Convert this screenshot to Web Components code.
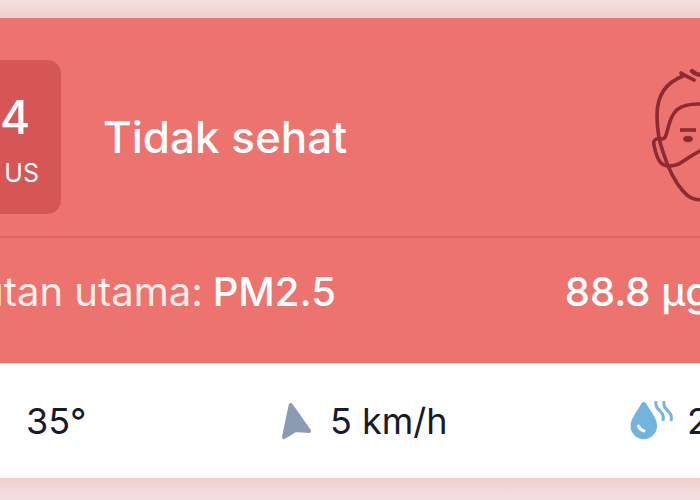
<!DOCTYPE html>
<html lang="id">
<head>
<meta charset="utf-8">
<title>Kualitas udara</title>
<style>
  body {
    margin: 0;
    padding: 18px 0 22px;
    background: linear-gradient(#f3e0e1, #f2cecd 18px, #f2cecd calc(100% - 22px), #f3e0e1);
    font-family: Inter, "Liberation Sans", sans-serif;
    overflow: hidden;
  }
</style>
</head>
<body>
<air-card>
  <air-status slot="status" value="4" unit="US">Tidak sehat</air-status>
  <air-pollutant slot="pollutant" label="utan utama:" amount="88.8 µg">PM2.5</air-pollutant>
  <air-reading slot="weather">35°</air-reading>
  <air-reading slot="weather" icon="wind">5 km/h</air-reading>
  <air-reading slot="weather" icon="humidity">2</air-reading>
</air-card>

<script>
class AirCard extends HTMLElement {
  constructor() {
    super();
    this.attachShadow({ mode: "open" });
  }

  static get styles() {
    return /* css */`
      :host {
        display: block;
        background: #fff;
      }

      .alert {
        background: #ed736f;
        color: #fff;
      }

      .weather {
        display: grid;
        grid-template-columns: minmax(0, 4fr) minmax(0, 5fr) minmax(0, 1fr);
        align-items: center;
        height: 115px;
        color: #161a2b;
      }
    `;
  }

  connectedCallback() {
    this.render();
  }

  render() {
    this.shadowRoot.innerHTML = /* html */`
    <style>${AirCard.styles}</style>
    <div class="alert">
      <slot name="status"></slot>
      <slot name="pollutant"></slot>
    </div>
    <div class="weather">
      <slot name="weather"></slot>
    </div>`;
  }
}

class AirStatus extends HTMLElement {
  constructor() {
    super();
    this.attachShadow({ mode: "open" });
  }

  static get styles() {
    return /* css */`
      :host {
        display: flex;
        align-items: center;
        padding: 42px 0 22px;
        border-bottom: 2px solid #d96866;
      }

      .index {
        box-sizing: border-box;
        width: 61px;
        height: 154px;
        padding: 29px 22px 0 0;
        border-radius: 0 14px 14px 0;
        background: #d65655;
        text-align: right;
      }

      .value {
        padding-right: 12px;
        font-size: 46px;
        line-height: 56px;
        font-weight: 500;
      }

      .unit {
        font-size: 25px;
        line-height: 56px;
      }

      .level {
        flex: 1;
        margin: 0 0 0 42px;
        font-size: 44px;
        line-height: 56px;
        font-weight: 500;
      }

      svg {
        width: 50px;
        height: 138px;
      }
    `;
  }

  connectedCallback() {
    this.render();
  }

  render() {
    this.shadowRoot.innerHTML = /* html */`
    <style>${AirStatus.styles}</style>
    <div class="index">
      <div class="value">${this.getAttribute("value")}</div>
      <div class="unit">${this.getAttribute("unit")}</div>
    </div>
    <h1 class="level"><slot></slot></h1>
    <svg viewBox="0 0 50 138" fill="none" stroke="#8e2a32" stroke-width="3.6" stroke-linecap="round" stroke-linejoin="round" aria-hidden="true">
      <path d="M44 12 C39 9 35 8 31 5 L33 8 C15 15 7 28 7 47 C7 59 9 73 13 84 C18 100 24 113 33 123 C39 130 44 132 52 132"/>
      <path d="M42 3 Q46 7 53 7" stroke-width="4.4"/>
      <path d="M10 71 C5 70 3 73 4 77 C6 87 8 92 11 95 C15 99 25 99 32 94 C38 90 45 85 52 82"/>
      <path d="M10 71 C16 72 16 67 18 60 C22 44 27 35 52 36"/>
      <path d="M30 62 H46" stroke-linecap="butt"/>
      <ellipse cx="38" cy="71" rx="5" ry="3.200" fill="#8e2a32" stroke="none"/>
    </svg>`;
  }
}

class AirPollutant extends HTMLElement {
  constructor() {
    super();
    this.attachShadow({ mode: "open" });
  }

  static get styles() {
    return /* css */`
      :host {
        display: flex;
        justify-content: space-between;
        align-items: flex-start;
        height: 95px;
        padding-top: 30px;
        font-size: 40px;
        line-height: 48px;
        white-space: nowrap;
      }

      .name {
        display: flex;
        gap: 10px;
        margin-left: -20px;
      }

      .kind,
      .amount {
        font-weight: 500;
      }

      .label {
        color: #ffeeeb;
      }

      .amount {
        margin-right: -10px;
      }
    `;
  }

  connectedCallback() {
    this.render();
  }

  render() {
    this.shadowRoot.innerHTML = /* html */`
    <style>${AirPollutant.styles}</style>
    <div class="name">
      <span class="label">${this.getAttribute("label")}</span>
      <span class="kind"><slot></slot></span>
    </div>
    <span class="amount">${this.getAttribute("amount")}</span>`;
  }
}

const icons = {
  wind: /* html */`
    <svg viewBox="0 0 42 42" aria-hidden="true">
      <path d="M10.700 5 L29 31 L15.500 30 L4 37 Z" fill="#8b9bb2" stroke="#8b9bb2" stroke-width="4" stroke-linejoin="round"/>
    </svg>`,
  humidity: /* html */`
    <svg viewBox="0 0 42 42" aria-hidden="true">
      <path d="M13.700 2 C15 2 16 3 17 5 C21 12 27 18 27 26 A13.200 13.200 0 0 1 0.600 26 C0.600 18 7 12 10.500 5 C11.500 3 12.500 2 13.700 2 Z" fill="#72b4dd"/>
      <path d="M8.500 26 Q10 30 14 31" fill="none" stroke="#fff" stroke-width="3" stroke-linecap="round"/>
      <path d="M26 1 C25 6 27 8 30 11 C33 14 34 16 33 21 M34 1 C33 6 35 8 38 11 C41 14 42 16 41 21" fill="none" stroke="#72b4dd" stroke-width="3"/>
    </svg>`
};

class AirReading extends HTMLElement {
  constructor() {
    super();
    this.attachShadow({ mode: "open" });
  }

  static get styles() {
    return /* css */`
      :host {
        display: flex;
        align-items: center;
        gap: 8px;
        font-size: 36px;
        line-height: 44px;
        white-space: nowrap;
      }

      :host(:not([icon])) {
        padding-left: 26px;
      }

      :host([icon="humidity"]) {
        gap: 15px;
      }

      svg {
        flex: none;
        width: 42px;
        height: 42px;
        overflow: visible;
      }
    `;
  }

  connectedCallback() {
    this.render();
  }

  render() {
    this.shadowRoot.innerHTML = /* html */`
    <style>${AirReading.styles}</style>
    ${icons[this.getAttribute("icon")] || ""}
    <span><slot></slot></span>`;
  }
}

customElements.define("air-card", AirCard);
customElements.define("air-status", AirStatus);
customElements.define("air-pollutant", AirPollutant);
customElements.define("air-reading", AirReading);
</script>
</body>
</html>
